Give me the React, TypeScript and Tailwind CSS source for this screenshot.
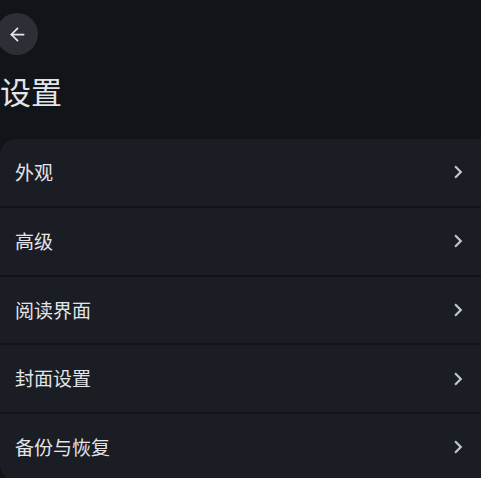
import { ArrowLeft } from "lucide-react";
import { MdChevronRight } from "react-icons/md";

const items = ["外观", "高级", "阅读界面", "封面设置", "备份与恢复"];

const App = () => {
  return (
    <div
      className="h-[478px] w-[481px] overflow-hidden bg-[#111418] text-[#e3e5e9]"
      style={{ fontFamily: '"Noto Sans CJK SC", "Noto Sans", sans-serif' }}
    >
      <div className="pt-[13px]">
        <button className="ml-[-4px] flex h-[42px] w-[42px] items-center justify-center rounded-full bg-[#2c2f36]">
          <ArrowLeft size={21} strokeWidth={2} className="text-[#e6e8ec]" />
        </button>
      </div>
      <h1 className="mt-[13px] h-[71px] text-[31px] leading-[46px] font-normal">设置</h1>
      <div className="flex w-[500px] flex-col gap-[2px] overflow-hidden rounded-2xl">
        {items.map((item) => (
          <div
            key={item}
            className="flex h-[66.75px] items-center bg-[#1a1d24] pl-[15px] pr-[29px]"
          >
            <span className="flex-1 text-[19px]">{item}</span>
            <MdChevronRight size={26} className="text-[#c3c6cd]" />
          </div>
        ))}
      </div>
    </div>
  );
};

export default App;
